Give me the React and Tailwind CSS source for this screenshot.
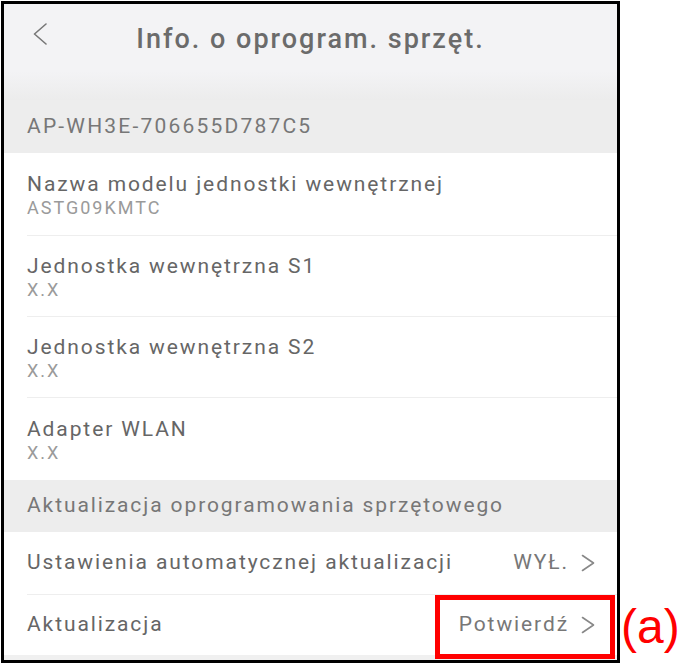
const font = { fontFamily: "Roboto, 'Noto Sans', sans-serif" };

function Chevron({ className, dir = "right" }) {
  const d = dir === "right" ? "M1.5 1.5 L12.5 9 L1.5 16.5" : "M13 1 L1.5 11 L13 21";
  const box = dir === "right" ? "0 0 14 18" : "0 0 15 22";
  return (
    <svg viewBox={box} className={className} fill="none" stroke="currentColor" strokeWidth="1.6" strokeLinecap="round" strokeLinejoin="round">
      <path d={d} />
    </svg>
  );
}

function InfoRow({ title, value, height, last }) {
  return (
    <div className="bg-white pl-[23px]">
      <div className={`flex flex-col justify-center ${height} ${last ? "" : "border-b border-[#eeeeee]"}`}>
        <div className="text-[21px] leading-[26px] tracking-[1.9px] text-[#666]">{title}</div>
        <div className="text-[18px] leading-[21px] tracking-[2px] text-[#9a9a9a]">{value}</div>
      </div>
    </div>
  );
}

function LinkRow({ title, value, height, divider }) {
  return (
    <div className="bg-white pl-[23px]">
      <div className={`flex items-center justify-between pr-[22px] ${height} ${divider ? "border-b border-[#eeeeee]" : ""}`}>
        <span className="text-[21px] tracking-[1.9px] text-[#666]">{title}</span>
        <span className="flex items-center gap-[12px] text-[21px] tracking-[1.9px] text-[#777]">
          {value}
          <Chevron className="h-[18px] w-[14px] text-[#888]" />
        </span>
      </div>
    </div>
  );
}

export default function App() {
  return (
    <div className="relative h-[667px] w-[688px] bg-white" style={font}>
      <div className="ml-[1px] mt-[1px] flex h-[662px] w-[619px] flex-col overflow-hidden border-[3px] border-black bg-[#f0f0f0]">
        <div className="relative flex h-[96px] shrink-0 bg-[linear-gradient(to_bottom,#f3f3f5_70%,#ececec)]">
          <Chevron dir="left" className="absolute left-[29px] top-[19px] h-[22px] w-[15px] text-[#777]" />
          <h1 className="mt-[17px] w-full text-center text-[27px] font-medium leading-[36px] tracking-[2px] text-[#6b6b6b]">
            Info. o oprogram. sprzęt.
          </h1>
        </div>
        <div className="flex h-[53px] shrink-0 items-center bg-[#ededed] pl-[23px] text-[21px] tracking-[2.2px] text-[#777]">
          AP-WH3E-706655D787C5
        </div>
        <InfoRow title="Nazwa modelu jednostki wewnętrznej" value="ASTG09KMTC" height="h-[83px]" />
        <InfoRow title="Jednostka wewnętrzna S1" value="X.X" height="h-[81px]" />
        <InfoRow title="Jednostka wewnętrzna S2" value="X.X" height="h-[81px]" />
        <InfoRow title="Adapter WLAN" value="X.X" height="h-[82px]" last />
        <div className="flex h-[52px] shrink-0 items-center bg-[#ededed] pl-[23px] text-[21px] tracking-[1.9px] text-[#777]">
          Aktualizacja oprogramowania sprzętowego
        </div>
        <LinkRow title="Ustawienia automatycznej aktualizacji" value="WYŁ." height="h-[63px]" divider />
        <LinkRow title="Aktualizacja" value="Potwierdź" height="h-[60px]" />
      </div>
      <div className="absolute left-[435px] top-[594px] h-[64px] w-[180px] border-[5px] border-[#ff0000]" />
      <div
        className="absolute left-[621px] top-[594px] text-[48px] leading-[64px] text-[#ff0000]"
        style={{ fontFamily: "'Liberation Sans', Arial, sans-serif" }}
      >
        (a)
      </div>
    </div>
  );
}
